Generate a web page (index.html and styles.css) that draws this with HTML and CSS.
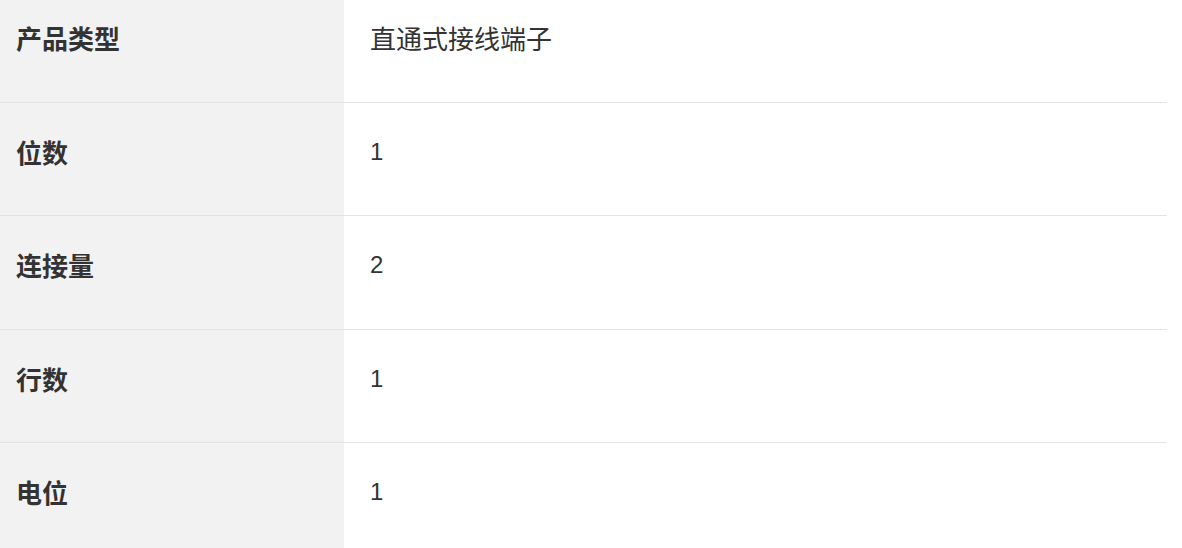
FILE: index.html
```html
<!DOCTYPE html>
<html lang="zh-CN">
<head>
<meta charset="utf-8">
<title>产品参数</title>
<link rel="stylesheet" href="styles.css">
</head>
<body>
<div class="spec">
  <div class="row">
    <div class="label">产品类型</div>
    <div class="value zh">直通式接线端子</div>
  </div>
  <div class="row">
    <div class="label">位数</div>
    <div class="value">1</div>
  </div>
  <div class="row">
    <div class="label">连接量</div>
    <div class="value">2</div>
  </div>
  <div class="row">
    <div class="label">行数</div>
    <div class="value">1</div>
  </div>
  <div class="row">
    <div class="label">电位</div>
    <div class="value">1</div>
  </div>
</div>
</body>
</html>
```
FILE: styles.css
```css
html, body {
  margin: 0;
  padding: 0;
  background: #ffffff;
}
body {
  font-family: "Liberation Sans", "Noto Sans CJK SC", sans-serif;
  color: #333333;
  overflow: hidden;
}
.spec {
  width: 1167px;
  display: flex;
  flex-direction: column;
}
.row {
  display: flex;
  border-bottom: 1px solid #e3e3e8;
}
.row:last-child {
  border-bottom: none;
}
.label,
.value {
  box-sizing: border-box;
  padding: 31px 0 0;
  line-height: 36px;
  height: 112.4px;
}
.row:first-child .label,
.row:first-child .value {
  padding-top: 20px;
  height: 102px;
}
.label {
  width: 344px;
  flex: none;
  background: #f2f2f2;
  padding-left: 16px;
  font-family: "Noto Sans CJK SC", "Liberation Sans", sans-serif;
  font-weight: 700;
  font-size: 26px;
}
.value {
  flex: 1;
  padding-left: 26px;
  font-size: 24px;
}
.value.zh {
  font-family: "Noto Sans CJK SC", "Liberation Sans", sans-serif;
  font-size: 26px;
  padding-left: 26px;
}
```
